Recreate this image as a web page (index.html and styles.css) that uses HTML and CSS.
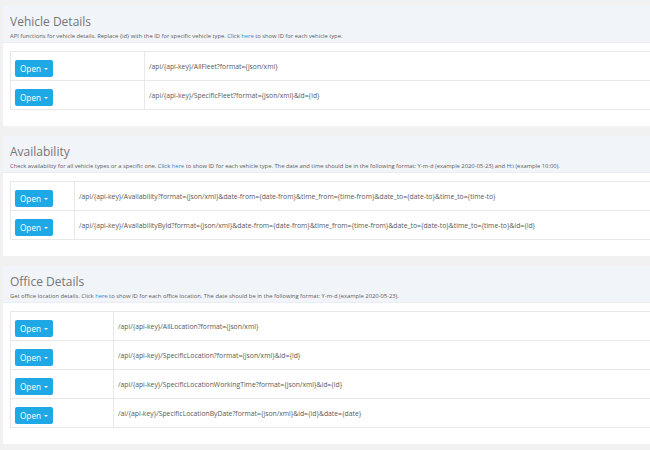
FILE: index.html
```html
<!DOCTYPE html>
<html>
<head>
<meta charset="utf-8">
<link rel="stylesheet" href="styles.css">
</head>
<body>
<div class="page">
  <section class="panel">
    <header class="panel-heading">
      <h3 class="title">Vehicle Details</h3>
      <p class="desc">API functions for vehicle details. Replace {id} with the ID for specific vehicle type. Click <a href="#">here</a> to show ID for each vehicle type.</p>
    </header>
    <div class="panel-body">
      <table class="api t-vehicle">
        <tr><td class="c1"><button class="btn">Open <span class="caret"></span></button></td><td class="c2">/api/{api-key}/AllFleet?format={json/xml}</td></tr>
        <tr><td class="c1"><button class="btn">Open <span class="caret"></span></button></td><td class="c2">/api/{api-key}/SpecificFleet?format={json/xml}&amp;id={id}</td></tr>
      </table>
    </div>
  </section>

  <section class="panel">
    <header class="panel-heading">
      <h3 class="title">Availability</h3>
      <p class="desc">Check availability for all vehicle types or a specific one. Click <a href="#">here</a> to show ID for each vehicle type. The date and time should be in the following format: Y-m-d (example 2020-05-23) and H:i (example 10:00).</p>
    </header>
    <div class="panel-body">
      <table class="api t-avail">
        <tr><td class="c1"><button class="btn">Open <span class="caret"></span></button></td><td class="c2">/api/{api-key}/Availability?format={json/xml}&amp;date-from={date-from}&amp;time_from={time-from}&amp;date_to={date-to}&amp;time_to={time-to}</td></tr>
        <tr><td class="c1"><button class="btn">Open <span class="caret"></span></button></td><td class="c2">/api/{api-key}/AvailabilityById?format={json/xml}&amp;date-from={date-from}&amp;time_from={time-from}&amp;date_to={date-to}&amp;time_to={time-to}&amp;id={id}</td></tr>
      </table>
    </div>
  </section>

  <section class="panel">
    <header class="panel-heading">
      <h3 class="title">Office Details</h3>
      <p class="desc">Get office location details. Click <a href="#">here</a> to show ID for each office location. The date should be in the following format: Y-m-d (example 2020-05-23).</p>
    </header>
    <div class="panel-body">
      <table class="api t-office">
        <tr><td class="c1"><button class="btn">Open <span class="caret"></span></button></td><td class="c2">/api/{api-key}/AllLocation?format={json/xml}</td></tr>
        <tr><td class="c1"><button class="btn">Open <span class="caret"></span></button></td><td class="c2">/api/{api-key}/SpecificLocation?format={json/xml}&amp;id={id}</td></tr>
        <tr><td class="c1"><button class="btn">Open <span class="caret"></span></button></td><td class="c2">/api/{api-key}/SpecificLocationWorkingTime?format={json/xml}&amp;id={id}</td></tr>
        <tr><td class="c1"><button class="btn">Open <span class="caret"></span></button></td><td class="c2">/ai/{api-key}/SpecificLocationByDate?format={json/xml}&amp;id={id}&amp;date={date}</td></tr>
      </table>
    </div>
  </section>
</div>
</body>
</html>
```

FILE: styles.css
```css
html, body {
  margin: 0;
  padding: 0;
}
body {
  background: #f1f1f1;
  font-family: "Open Sans", "Liberation Sans", sans-serif;
  color: #5a5a5a;
  overflow: hidden;
}
.page {
  padding: 6px 0 0 3px;
  display: flex;
  flex-direction: column;
  gap: 10px;
}
.panel {
  background: #ffffff;
}
.panel-heading {
  background: #f1f4f9;
  height: 37px;
  box-sizing: border-box;
  padding: 8px 7px 0 7px;
  border-bottom: 1px solid #e9edf2;
}
.title {
  margin: 0;
  font-size: 12px;
  font-weight: 400;
  line-height: 16px;
  color: #767676;
  transform: scaleY(1.12);
  transform-origin: left bottom;
}
.desc {
  margin: 2px 0 0 0;
  font-size: 5.8px;
  line-height: 8px;
  color: #5c5c5c;
  white-space: nowrap;
}
.desc a {
  color: #2a8fd6;
  text-decoration: none;
}
.panel-body {
  padding: 8px 0 16px 7px;
}
table.api {
  width: 100%;
  border-collapse: collapse;
  border: 1px solid #e8e8e8;
  border-right: 0;
}
table.api td {
  border: 1px solid #e8e8e8;
  height: 29px;
  padding: 0 4px;
  vertical-align: middle;
  box-sizing: border-box;
}
table.api td.c2 {
  font-size: 6.8px;
  color: #595959;
  white-space: nowrap;
  border-right: 0;
}
.t-vehicle .c1 { width: 134px; }
.t-avail .c1 { width: 64px; }
.t-office .c1 { width: 103px; }
.btn {
  display: inline-flex;
  align-items: center;
  justify-content: center;
  gap: 3px;
  width: 38px;
  height: 17px;
  margin-top: -1px;
  padding: 0;
  border: 0;
  border-radius: 2px;
  background: #1fa8e6;
  color: #ffffff;
  font-family: "Open Sans", "Liberation Sans", sans-serif;
  font-size: 8.2px;
  font-weight: 400;
}
.caret {
  width: 0;
  height: 0;
  border-left: 2px solid transparent;
  border-right: 2px solid transparent;
  border-top: 2px solid #ffffff;
}
```
